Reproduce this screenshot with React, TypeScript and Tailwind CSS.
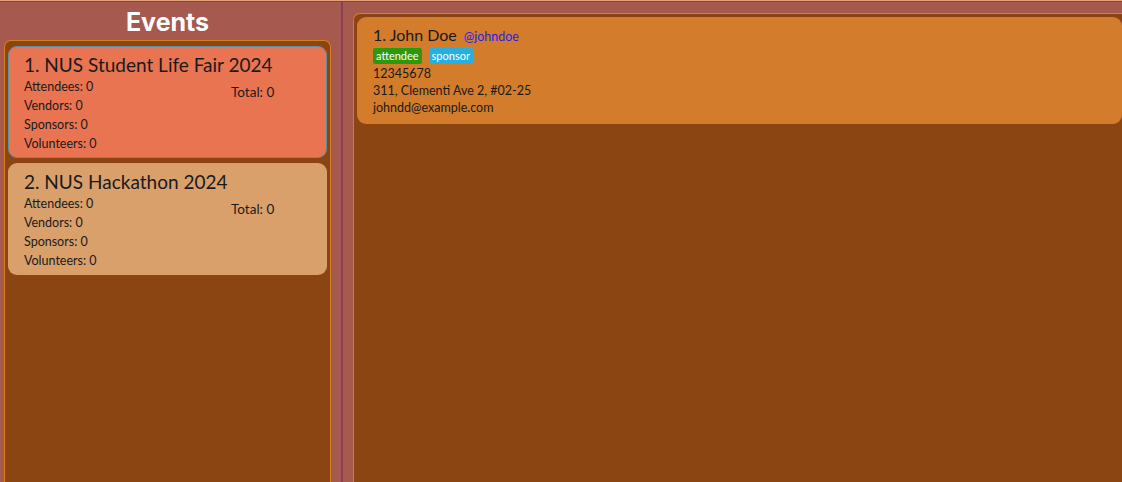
const FONT = { fontFamily: "Lato, 'Noto Sans', sans-serif" };

type Event = { name: string; selected?: boolean };

const EVENTS: Event[] = [
  { name: "1. NUS Student Life Fair 2024", selected: true },
  { name: "2. NUS Hackathon 2024" },
];

function EventCard({ event }: { event: Event }) {
  const bg = event.selected
    ? "bg-[#e97451] border-[1.5px] border-[#5f8fa3]"
    : "bg-[#d9a06c] border-[1.5px] border-transparent";
  return (
    <div className={`${bg} rounded-[9px] pl-[15px] pr-[10px] pt-[5px] pb-[4px] text-[#1a1a1a]`}>
      <div className="text-[19px] leading-[25px]">{event.name}</div>
      <div className="flex">
        <div className="w-[207px] text-[12.5px] leading-[19px]">
          <div>Attendees: 0</div>
          <div>Vendors: 0</div>
          <div>Sponsors: 0</div>
          <div>Volunteers: 0</div>
        </div>
        <div className="pt-[6px] text-[13.5px] leading-[19px]">Total: 0</div>
      </div>
    </div>
  );
}

function PersonCard() {
  return (
    <div className="rounded-[9px] bg-[#d27c2c] pl-[16px] pt-[7px] pb-[8px] text-[#1a1a1a]">
      <div className="flex items-baseline gap-[7px]">
        <span className="text-[16px] leading-[22px]">1. John Doe</span>
        <span className="text-[12.5px] text-[#2a1fe8]">@johndoe</span>
      </div>
      <div className="mt-[1px] flex gap-[7px]">
        <span className="rounded-[2px] bg-[#2a9a0c] px-[3px] text-[11px] leading-[16px] text-white">
          attendee
        </span>
        <span className="rounded-[2px] bg-[#26b0e2] px-[3px] text-[11px] leading-[16px] text-white">
          sponsor
        </span>
      </div>
      <div className="mt-[1px] text-[12.5px] leading-[17px]">12345678</div>
      <div className="text-[12.5px] leading-[17px]">311, Clementi Ave 2, #02-25</div>
      <div className="text-[12.5px] leading-[17px]">johndd@example.com</div>
    </div>
  );
}

export default function App() {
  return (
    <div
      className="flex h-[482px] w-[1122px] flex-col overflow-hidden bg-[#a65a4f]"
      style={FONT}
    >
      <div className="h-[1px] bg-[#e3a27a]" />
      <div className="h-[1px] bg-[#8a3d55]" />
      <div className="flex min-h-0 flex-1">
        {/* event list */}
        <div className="flex w-[341px] flex-col pl-[4px] pr-[10px]">
          <h1
            className="h-[38px] text-center text-[25px] font-bold leading-[41px] text-white"
            style={{ fontFamily: "Inter, sans-serif" }}
          >
            Events
          </h1>
          <div className="flex flex-1 flex-col gap-[5px] rounded-t-[7px] border border-b-0 border-[#d8801f] bg-[#8b4513] px-[3px] pt-[5px]">
            {EVENTS.map((e) => (
              <EventCard key={e.name} event={e} />
            ))}
          </div>
        </div>
        <div className="w-[2px] bg-[#8a3d55]" />
        {/* person list */}
        <div className="flex flex-1 flex-col pl-[10px] pt-[11px]">
          <div className="-mr-[8px] flex-1 rounded-tl-[7px] border border-b-0 border-[#d8801f] bg-[#8b4513] pl-[3px] pr-[7px] pt-[3px]">
            <PersonCard />
          </div>
        </div>
      </div>
    </div>
  );
}
